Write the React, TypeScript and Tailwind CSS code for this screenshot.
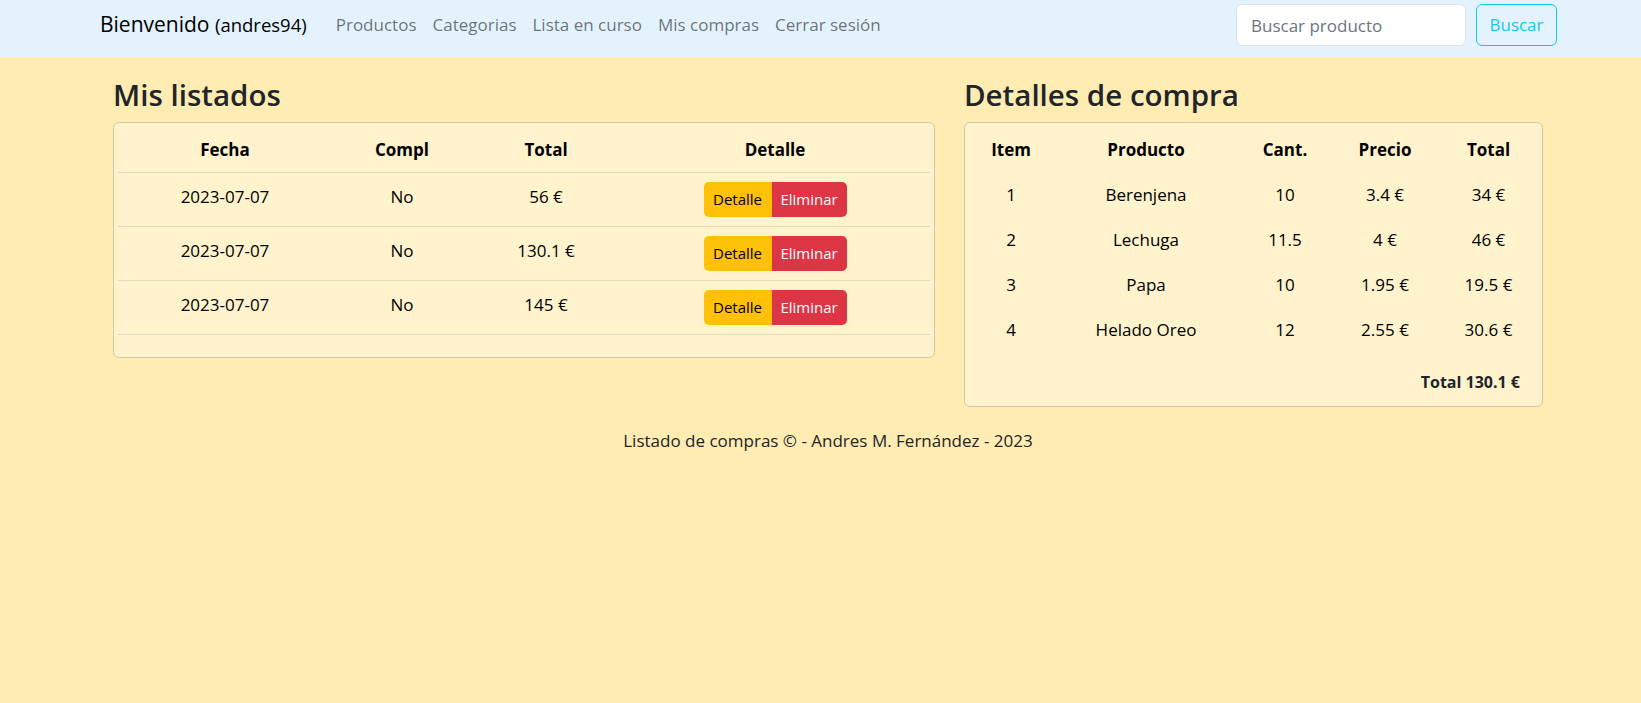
import React from "react";

const listados = [
  { fecha: "2023-07-07", compl: "No", total: "56 €" },
  { fecha: "2023-07-07", compl: "No", total: "130.1 €" },
  { fecha: "2023-07-07", compl: "No", total: "145 €" },
];

const detalles = [
  { item: 1, producto: "Berenjena", cant: "10", precio: "3.4 €", total: "34 €" },
  { item: 2, producto: "Lechuga", cant: "11.5", precio: "4 €", total: "46 €" },
  { item: 3, producto: "Papa", cant: "10", precio: "1.95 €", total: "19.5 €" },
  { item: 4, producto: "Helado Oreo", cant: "12", precio: "2.55 €", total: "30.6 €" },
];

export default function App() {
  return (
    <div className="min-h-screen bg-[#ffecb3] font-['Open_Sans','Segoe_UI',sans-serif] text-[#212529]">
      <nav className="flex h-[57px] items-center bg-[#e3f2fd] pb-[11px] pl-[100px] pr-[84px] pt-[4px]">
        <a className="mr-[21px] text-[21px] text-black">
          Bienvenido <small className="text-[18.5px]">(andres94)</small>
        </a>
        <ul className="flex text-[17px] text-black/55">
          {["Productos", "Categorias", "Lista en curso", "Mis compras", "Cerrar sesión"].map((l) => (
            <li key={l} className="px-2">
              {l}
            </li>
          ))}
        </ul>
        <div className="ml-auto flex gap-[10px]">
          <input
            placeholder="Buscar producto"
            className="h-[42px] w-[230px] rounded-[6px] border border-[#dee2e6] bg-white px-[14px] text-[17px] placeholder:text-[#6c757d]"
          />
          <button className="h-[42px] w-[81px] rounded-[6px] border border-[#0dcaf0] text-[17px] text-[#0dcaf0]">
            Buscar
          </button>
        </div>
      </nav>

      <main className="pl-[113px] pr-[98px] pt-[19px]">
        <div className="flex gap-[29px]">
          <section className="w-[822px]">
            <h2 className="mb-2 text-[29.5px] font-semibold leading-[38px]">Mis listados</h2>
            <div className="rounded-[6px] border border-[#d2c8a9] bg-[#fff3cd] p-1">
              <table className="mb-[18px] w-full table-fixed text-center text-[17px] leading-6 text-black">
                <colgroup>
                  <col className="w-[214px]" />
                  <col className="w-[140px]" />
                  <col className="w-[148px]" />
                  <col />
                </colgroup>
                <thead>
                  <tr className="h-[45px] border-b border-[#e3d9bd]">
                    <th className="pt-[2px] font-bold">Fecha</th>
                    <th className="pt-[2px] font-bold">Compl</th>
                    <th className="pt-[2px] font-bold">Total</th>
                    <th className="pt-[2px] font-bold">Detalle</th>
                  </tr>
                </thead>
                <tbody>
                  {listados.map((r, i) => (
                    <tr key={i} className="border-b border-[#e3d9bd]">
                      <td className="pt-3 align-top">{r.fecha}</td>
                      <td className="pt-3 align-top">{r.compl}</td>
                      <td className="pt-3 align-top">{r.total}</td>
                      <td className="py-[9px] align-top">
                        <div className="inline-flex h-[35px] text-[15px]">
                          <button className="w-[68px] rounded-l-[5px] bg-[#ffc107] text-black">Detalle</button>
                          <button className="w-[75px] rounded-r-[5px] bg-[#dc3545] text-white">Eliminar</button>
                        </div>
                      </td>
                    </tr>
                  ))}
                </tbody>
              </table>
            </div>
          </section>

          <section className="flex-1">
            <h2 className="mb-2 text-[29.5px] font-semibold leading-[38px]">Detalles de compra</h2>
            <div className="rounded-[6px] border border-[#d2c8a9] bg-[#fff3cd] p-1">
              <table className="mb-4 w-full table-fixed text-center text-[17px] leading-6 text-black">
                <colgroup>
                  <col className="w-[84px]" />
                  <col className="w-[186px]" />
                  <col className="w-[92px]" />
                  <col className="w-[108px]" />
                  <col />
                </colgroup>
                <thead>
                  <tr className="h-[45px]">
                    <th className="font-bold">Item</th>
                    <th className="font-bold">Producto</th>
                    <th className="font-bold">Cant.</th>
                    <th className="font-bold">Precio</th>
                    <th className="font-bold">Total</th>
                  </tr>
                </thead>
                <tbody>
                  {detalles.map((d) => (
                    <tr key={d.item} className="h-[45px]">
                      <td>{d.item}</td>
                      <td>{d.producto}</td>
                      <td>{d.cant}</td>
                      <td>{d.precio}</td>
                      <td>{d.total}</td>
                    </tr>
                  ))}
                </tbody>
              </table>
              <p className="pb-[8px] pr-[18px] pt-[2px] text-right text-[16px] font-bold leading-6">Total 130.1 €</p>
            </div>
          </section>
        </div>

        <footer className="mt-[22px] text-center text-[17px] leading-6">
          Listado de compras © - Andres M. Fernández - 2023
        </footer>
      </main>
    </div>
  );
}
